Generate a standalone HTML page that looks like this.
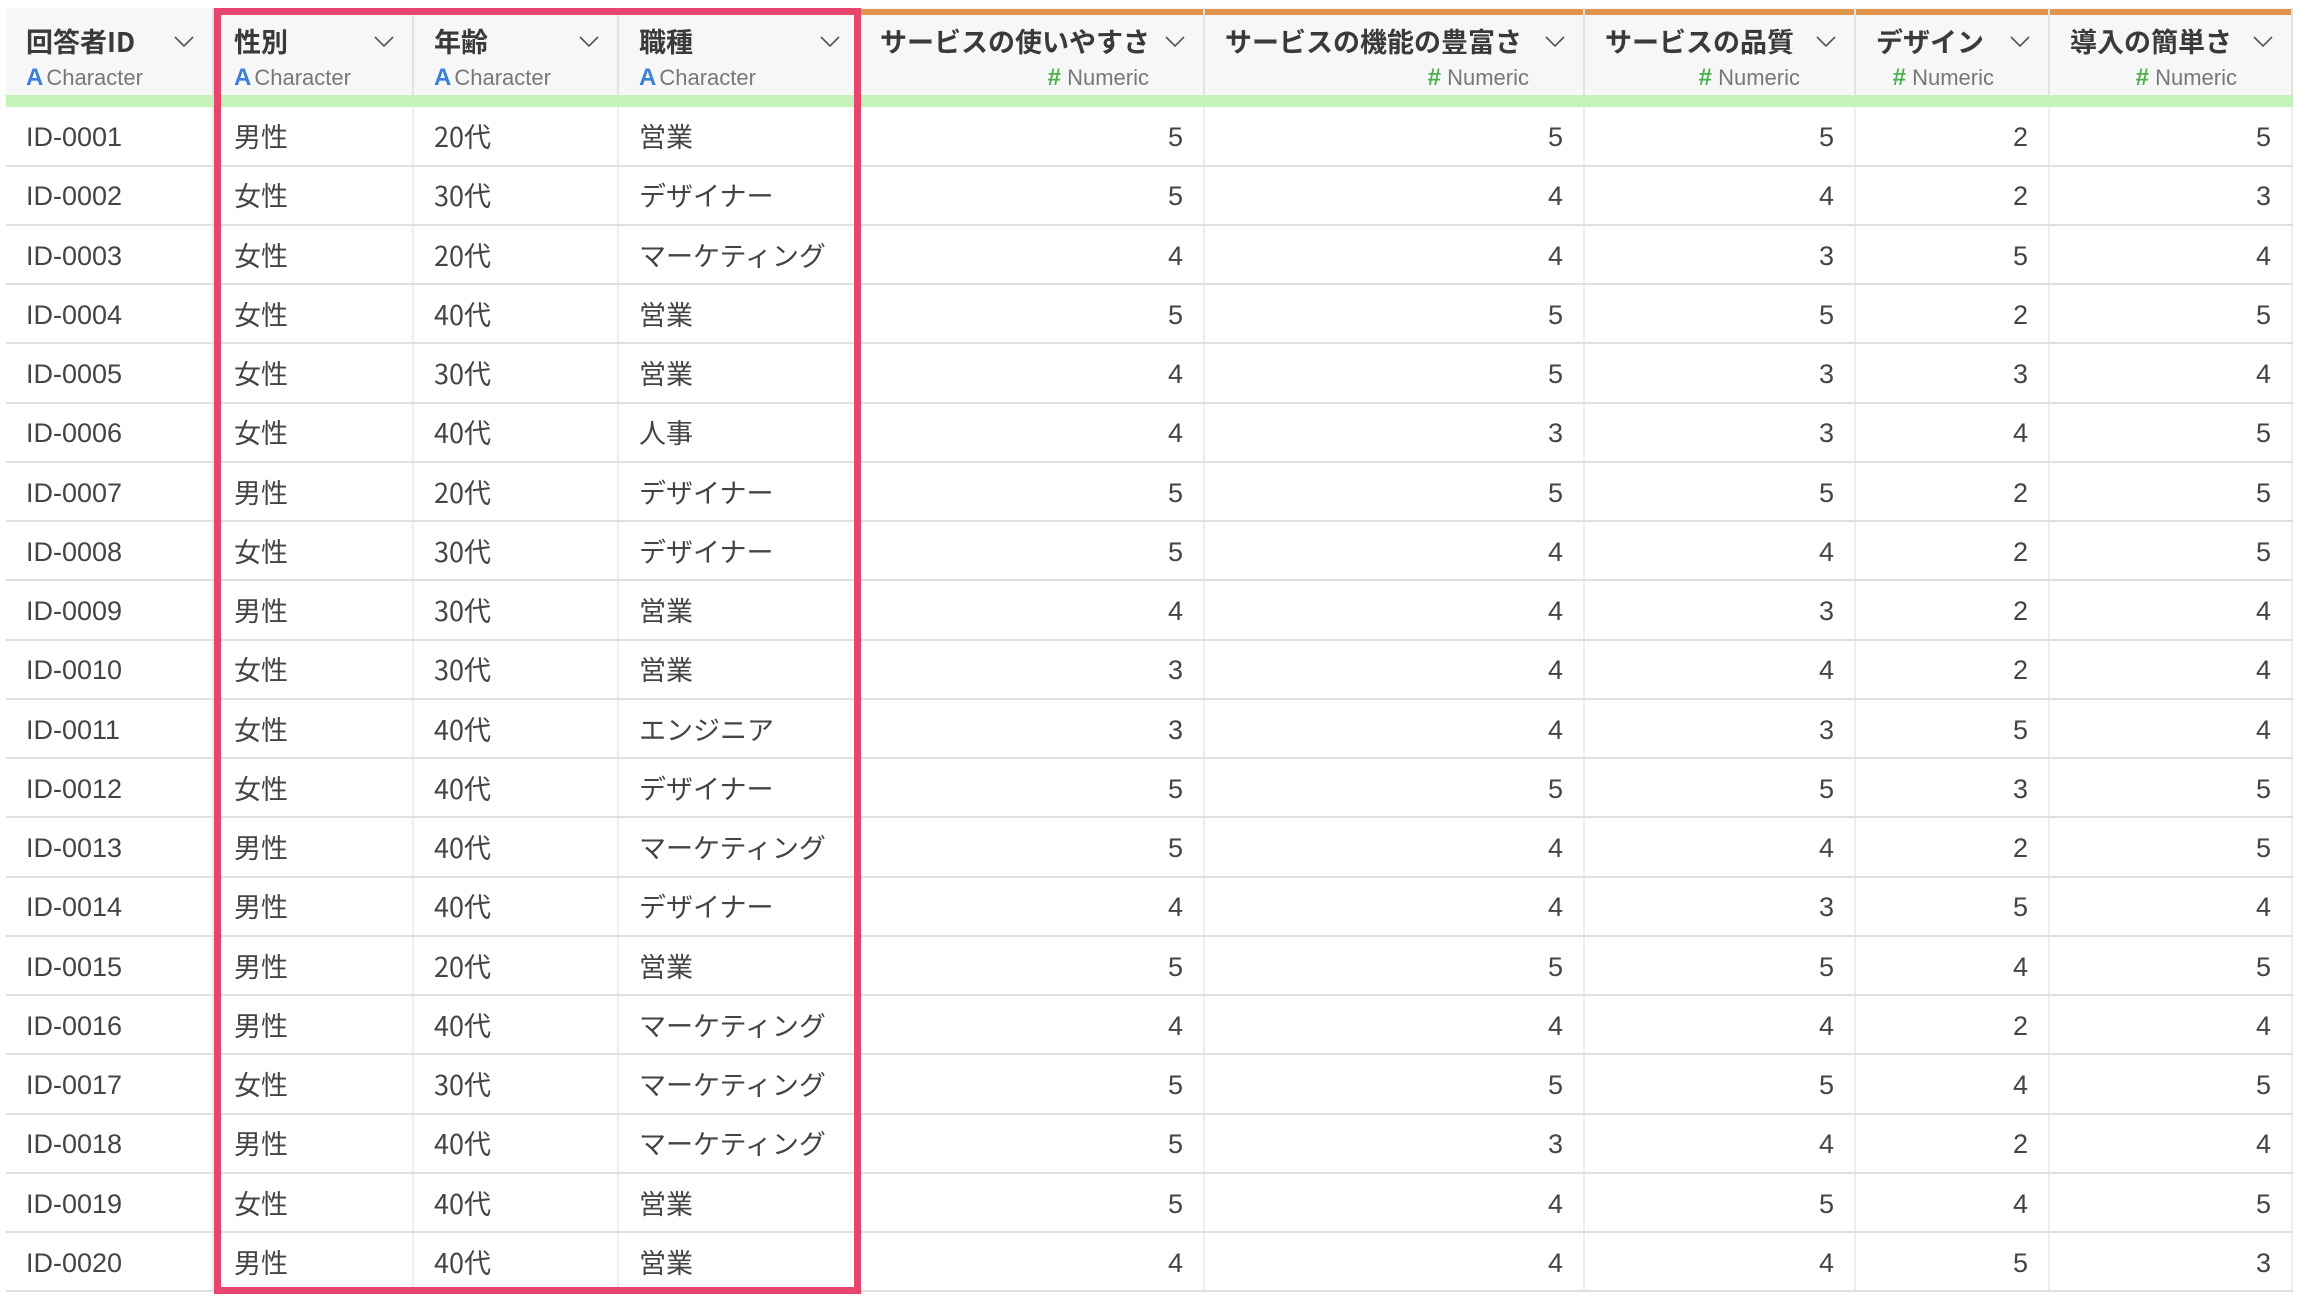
<!DOCTYPE html>
<html><head><meta charset="utf-8"><style>
body{margin:0;width:2322px;height:1314px;background:#fff;position:relative;overflow:hidden;font-family:"Liberation Sans","Noto Sans CJK JP",sans-serif;color:#444}
.a{position:absolute}
.h{position:absolute;top:8px;height:87px;background:#f7f7f7;border-right:2px solid #e2e2e2;box-sizing:border-box}
.t{position:absolute;top:21px;font-size:27px;font-weight:bold;color:#3a3a3a;white-space:nowrap;font-family:"Noto Sans CJK JP",sans-serif;line-height:40px}
.s{position:absolute;top:64px;font-size:22px;color:#777;white-space:nowrap}
.A{color:#3b82d6;font-weight:bold;font-size:24px;margin-right:3px}
.N{color:#4caf50;font-weight:bold;font-size:24px}
.ch{position:absolute;top:36px;width:20px;height:12px}
.c{position:absolute;font-size:27px;white-space:nowrap;color:#444;line-height:40px}
.j{font-family:"Noto Sans CJK JP",sans-serif}
</style></head><body>
<div class="a" style="left:6px;top:8px;width:2287px;height:2px;background:#ddd"></div>
<div id="hdr"></div>
<div class="a" style="left:6px;top:95px;width:2287px;height:12px;background:#c5f2bb"></div>
<div id="body"></div>
<div class="a" style="left:214px;top:8px;width:647px;height:1286px;border:7px solid #e8456e;box-sizing:border-box"></div>
<script>
var cols=[6,214,414,619,860,1205,1585,1856,2050,2293];
var names=["回答者ID","性別","年齢","職種","サービスの使いやすさ","サービスの機能の豊富さ","サービスの品質","デザイン","導入の簡単さ"];
var H="";
for(var i=0;i<9;i++){var l=cols[i],w=cols[i+1]-l;
H+='<div class="h" style="left:'+l+'px;width:'+w+'px"></div>';
if(i>=4)H+='<div class="a" style="left:'+l+'px;top:9px;width:'+(w-2)+'px;height:6px;background:#e0944c"></div>';
H+='<div class="t" style="left:'+(l+20)+'px">'+names[i]+'</div>';
H+='<svg class="ch" style="left:'+(l+w-40)+'px" viewBox="0 0 20 12"><polyline points="1,1 10,10 19,1" fill="none" stroke="#555" stroke-width="1.6"/></svg>';
if(i<4)H+='<div class="s" style="left:'+(l+20)+'px"><span class="A">A</span>Character</div>';
else H+='<div class="s" style="right:'+(2322-(l+w-56))+'px"><span class="N">#</span> Numeric</div>';}
document.getElementById('hdr').innerHTML=H;
var d=[["男性","20代","営業",5,5,5,2,5],["女性","30代","デザイナー",5,4,4,2,3],["女性","20代","マーケティング",4,4,3,5,4],["女性","40代","営業",5,5,5,2,5],["女性","30代","営業",4,5,3,3,4],["女性","40代","人事",4,3,3,4,5],["男性","20代","デザイナー",5,5,5,2,5],["女性","30代","デザイナー",5,4,4,2,5],["男性","30代","営業",4,4,3,2,4],["女性","30代","営業",3,4,4,2,4],["女性","40代","エンジニア",3,4,3,5,4],["女性","40代","デザイナー",5,5,5,3,5],["男性","40代","マーケティング",5,4,4,2,5],["男性","40代","デザイナー",4,4,3,5,4],["男性","20代","営業",5,5,5,4,5],["男性","40代","マーケティング",4,4,4,2,4],["女性","30代","マーケティング",5,5,5,4,5],["男性","40代","マーケティング",5,3,4,2,4],["女性","40代","営業",5,4,5,4,5],["男性","40代","営業",4,4,4,5,3]];
var B="";
for(var i=1;i<10;i++)B+='<div class="a" style="left:'+(cols[i]-2)+'px;top:107px;width:2px;height:1185px;background:#eee"></div>';
for(var r=0;r<20;r++){var y=107+r*59.25;
B+='<div class="a" style="left:6px;top:'+(y+57.5)+'px;width:2287px;height:2px;background:#e0e0e0"></div>';
var row=["ID-00"+(r<9?"0":"")+(r+1)].concat(d[r]);
for(var i=0;i<9;i++){
if(i==0)B+='<div class="c" style="left:'+(cols[i]+20)+'px;top:'+(y+10)+'px">'+row[i]+'</div>';
else if(i<4)B+='<div class="c j" style="left:'+(cols[i]+20)+'px;top:'+(y+9)+'px">'+row[i]+'</div>';
else B+='<div class="c" style="right:'+(2322-cols[i+1]+22)+'px;top:'+(y+10)+'px">'+row[i]+'</div>';}}
document.getElementById('body').innerHTML=B;
</script>
</body></html>
